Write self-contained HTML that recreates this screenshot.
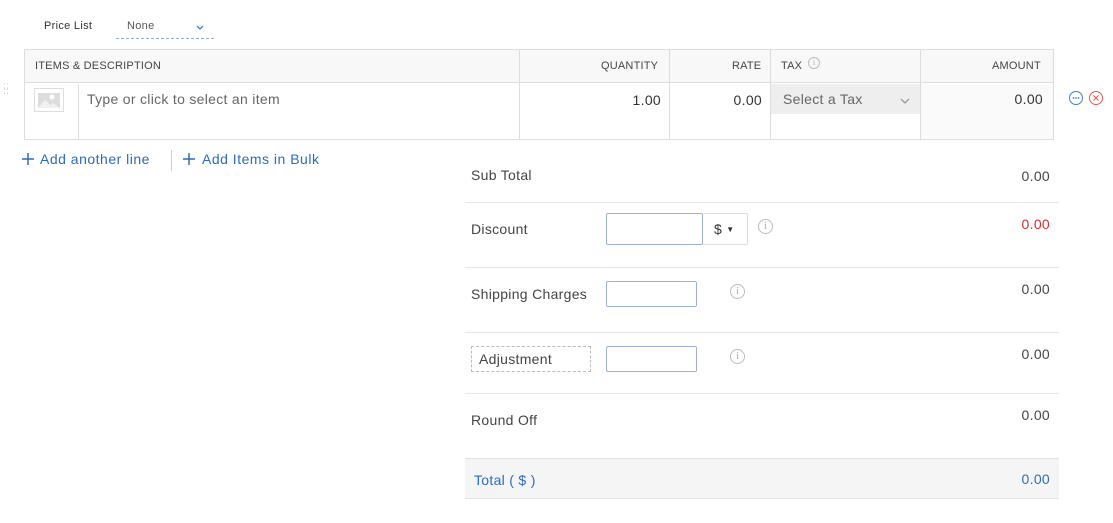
<!DOCTYPE html>
<html><head><style>
*{box-sizing:border-box;margin:0;padding:0}
body{width:1113px;height:523px;background:#fff;font-family:"Liberation Sans",sans-serif;color:#444;position:relative;overflow:hidden;letter-spacing:.3px}
.a{position:absolute}
.hd{font-size:11px;color:#444;top:60px;letter-spacing:.2px}
.info{position:absolute;width:15px;height:15px;border:1px solid #bbb;border-radius:50%;font-size:10px;color:#aaa;text-align:center;line-height:13px;font-family:"Liberation Serif",serif;letter-spacing:0}
.inp{position:absolute;border:1px solid #9db0d6;border-radius:2px;background:#fff}
.hl{position:absolute;left:465px;width:594px;height:1px;background:#e6e6e6}
.lbl{position:absolute;left:471px;font-size:14px;color:#444}
.val{position:absolute;right:63px;font-size:14px;color:#444}
</style></head><body>
<div class="a" style="left:44px;top:20px;font-size:11px;color:#333">Price List</div>
<div class="a" style="left:127px;top:20px;font-size:11px;color:#555">None</div>
<svg class="a" style="left:196px;top:25px" width="8" height="6"><path d="M1 1l3 3 3-3" fill="none" stroke="#3f7ec4" stroke-width="1.3"/></svg>
<div class="a" style="left:116px;top:38px;width:98px;border-top:1px dashed #9ab"></div>

<div class="a" style="left:24px;top:49px;width:1030px;height:91px;border:1px solid #ddd"></div>
<div class="a" style="left:25px;top:50px;width:1028px;height:33px;background:#f8f8f8;border-bottom:1px solid #ddd"></div>
<div class="a" style="left:921px;top:84px;width:132px;height:55px;background:#fafafa"></div>
<div class="a" style="left:519px;top:50px;width:1px;height:89px;background:#ddd"></div>
<div class="a" style="left:669px;top:50px;width:1px;height:89px;background:#ddd"></div>
<div class="a" style="left:770px;top:50px;width:1px;height:89px;background:#ddd"></div>
<div class="a" style="left:920px;top:50px;width:1px;height:89px;background:#ddd"></div>
<div class="a" style="left:78px;top:84px;width:1px;height:55px;background:#ddd"></div>
<div class="a hd" style="left:35px">ITEMS &amp; DESCRIPTION</div>
<div class="a hd" style="left:601px">QUANTITY</div>
<div class="a hd" style="left:732px">RATE</div>
<div class="a hd" style="left:781px">TAX</div>
<div class="info" style="left:808px;top:57px;width:12px;height:12px;line-height:10px;font-size:8px">i</div>
<div class="a hd" style="left:992px">AMOUNT</div>
<div class="a" style="left:3px;top:85px;color:#ccc;font-size:9px;line-height:4px">⁚⁚<br>⁚⁚</div>
<div class="a" style="left:34px;top:88px;width:30px;height:24px;border:1px solid #ddd;background:#fff"><svg width="28" height="22"><rect x="3" y="4" width="22" height="15" fill="#ddd"/><circle cx="17" cy="8" r="2.5" fill="#fff"/><path d="M3 19l7-8 5 5 3-2 7 5z" fill="#fff" opacity=".6"/></svg></div>
<div class="a" style="left:87px;top:91px;font-size:14px;color:#666">Type or click to select an item</div>
<div class="a" style="left:610px;top:92px;width:51px;text-align:right;font-size:14px;color:#333">1.00</div>
<div class="a" style="left:710px;top:92px;width:52px;text-align:right;font-size:14px;color:#333">0.00</div>
<div class="a" style="left:771px;top:84px;width:149px;height:30px;background:#eee"></div>
<div class="a" style="left:783px;top:91px;font-size:14px;color:#666">Select a Tax</div>
<svg class="a" style="left:900px;top:98px" width="10" height="7"><path d="M1 1l4 4 4-4" fill="none" stroke="#999" stroke-width="1.3"/></svg>
<div class="a" style="left:990px;top:91px;width:53px;text-align:right;font-size:14px;color:#333">0.00</div>
<svg class="a" style="left:1068px;top:90px" width="38" height="16"><circle cx="8" cy="8" r="6.5" fill="none" stroke="#3f7ec4"/><circle cx="5.5" cy="8" r=".9" fill="#3f7ec4"/><circle cx="8" cy="8" r=".9" fill="#3f7ec4"/><circle cx="10.5" cy="8" r=".9" fill="#3f7ec4"/><circle cx="28" cy="8" r="6.5" fill="none" stroke="#e55"/><path d="M25.5 5.5l5 5M30.5 5.5l-5 5" stroke="#e55"/></svg>

<svg class="a" style="left:21px;top:152px" width="14" height="14"><path d="M7 1v12M1 7h12" stroke="#2a6bbf" stroke-width="1.5"/></svg>
<div class="a" style="left:40px;top:151px;font-size:14px;color:#2a6bbf;letter-spacing:.5px">Add another line</div>
<div class="a" style="left:171px;top:150px;width:1px;height:21px;background:#ccc"></div>
<svg class="a" style="left:182px;top:152px" width="14" height="14"><path d="M7 1v12M1 7h12" stroke="#2a6bbf" stroke-width="1.5"/></svg>
<div class="a" style="left:202px;top:151px;font-size:14px;color:#2a6bbf;letter-spacing:.5px">Add Items in Bulk</div>

<div class="lbl" style="top:167px">Sub Total</div><div class="val" style="top:168px">0.00</div>
<div class="hl" style="top:202px"></div>
<div class="lbl" style="top:221px">Discount</div>
<div class="inp" style="left:606px;top:213px;width:97px;height:32px"></div>
<div class="a" style="left:702px;top:213px;width:46px;height:32px;border:1px solid #ddd;border-left:none;border-radius:0 2px 2px 0;font-size:14px;color:#333;padding:7px 0 0 12px">$ <span style="font-size:8px;vertical-align:2px">▼</span></div>
<div class="info" style="left:758px;top:219px">i</div>
<div class="val" style="top:216px;color:#d0312d">0.00</div>
<div class="hl" style="top:267px"></div>
<div class="lbl" style="top:286px">Shipping Charges</div>
<div class="inp" style="left:606px;top:281px;width:91px;height:26px"></div>
<div class="info" style="left:730px;top:284px">i</div>
<div class="val" style="top:281px">0.00</div>
<div class="hl" style="top:332px"></div>
<div class="a" style="left:471px;top:346px;width:120px;height:26px;border:1px dashed #bbb;font-size:14px;color:#444;padding:4px 0 0 7px">Adjustment</div>
<div class="inp" style="left:606px;top:346px;width:91px;height:26px"></div>
<div class="info" style="left:730px;top:349px">i</div>
<div class="val" style="top:346px">0.00</div>
<div class="hl" style="top:393px"></div>
<div class="lbl" style="top:412px">Round Off</div><div class="val" style="top:407px">0.00</div>
<div class="a" style="left:465px;top:458px;width:594px;height:41px;background:#f5f5f5;border-top:1px solid #e3e3e3;border-bottom:1px solid #e3e3e3"></div>
<div class="lbl" style="left:474px;top:472px;color:#2a6bbf">Total ( $ )</div>
<div class="val" style="top:471px;color:#2a6bbf">0.00</div>
</body></html>
